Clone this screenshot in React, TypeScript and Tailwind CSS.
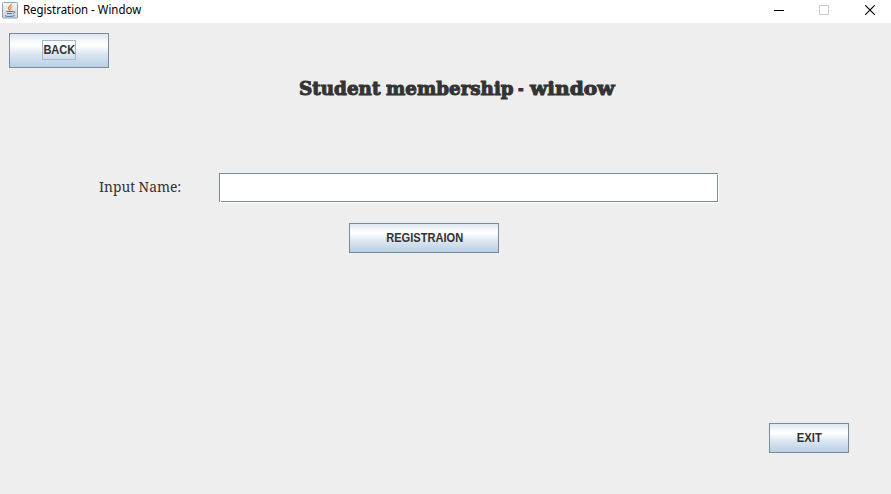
import type { ReactNode } from 'react';

function JavaIcon() {
  return (
    <svg width="16" height="17" viewBox="0 0 16 17" className="block shrink-0" fill="none">
      <defs>
        <linearGradient id="tile" x1="0" y1="0" x2="0" y2="1">
          <stop offset="0" stopColor="#f6f8fa" />
          <stop offset="1" stopColor="#c3d0dc" />
        </linearGradient>
      </defs>
      <rect x="0.5" y="0.5" width="15" height="15.5" rx="1" fill="url(#tile)" stroke="#8ea2b5" />
      <path d="M9.2 2C9.6 4 5.8 4.6 6.6 6.4C6.9 7.1 7.6 7.5 7.4 8.6" stroke="#e8843c" strokeWidth="1.5" />
      <path d="M10.4 4.4C8.2 5.2 8.2 6 8.9 6.9C9.2 7.4 8.9 8 8.5 8.4" stroke="#e8843c" strokeWidth="1" />
      <path d="M4.4 9.5H11M5 11.5H10.2M3 13.7C4.6 14.8 10.4 14.8 12.6 13.6" stroke="#55799b" strokeWidth="1" />
      <path d="M11 9.4C13.6 8.8 13.4 11 11 11.6" stroke="#55799b" strokeWidth="0.9" />
    </svg>
  );
}

function TitleBar() {
  return (
    <header className="flex h-[23px] items-start bg-white">
      <div className="flex pl-[2px] pt-[2px]">
        <JavaIcon />
        <span className="ml-[5px] inline-block h-4 origin-left scale-x-[0.953] whitespace-nowrap font-['Noto_Sans',sans-serif] text-[12px] leading-[16px] text-black">
          Registration - Window
        </span>
      </div>
      <div className="ml-auto flex pr-4 pt-[5px]">
        <svg width="10" height="10" className="mr-[35px]" shapeRendering="crispEdges">
          <path d="M0 5.5H10" stroke="#000" />
        </svg>
        <svg width="10" height="10" className="mr-[36px]" shapeRendering="crispEdges">
          <rect x="0.5" y="0.5" width="9" height="9" fill="none" stroke="#cccccc" />
        </svg>
        <svg width="10" height="10">
          <path d="M0.3 0.3L9.7 9.7M9.7 0.3L0.3 9.7" stroke="#000" strokeWidth="1.15" />
        </svg>
      </div>
    </header>
  );
}

function MetalButton({ className, children }: { className: string; children: ReactNode }) {
  return (
    <button
      className={`flex items-center justify-center border border-[#7a8a99] bg-[linear-gradient(to_bottom,#dde8f3_0%,#ffffff_30%,#ffffff_34%,#dce7f2_60%,#b8cfe5_100%)] font-['Liberation_Sans',sans-serif] text-[12px] font-bold leading-[14px] text-[#333333] ${className}`}
    >
      {children}
    </button>
  );
}

export default function App() {
  return (
    <div className="flex h-[494px] w-[891px] flex-col overflow-hidden bg-[#eeeeee] text-[#333333]">
      <TitleBar />
      <main className="flex flex-1 flex-col">
        <MetalButton className="ml-[9px] mt-[10px] h-[35px] w-[100px] pb-[2px]">
          <span className="flex h-[20px] w-[34px] items-center justify-center border border-[#a3b8cc]">
            <span className="inline-block scale-x-[0.92]">BACK</span>
          </span>
        </MetalButton>
        <h1 className="ml-[299px] mt-[9px] flex h-6 whitespace-nowrap font-['DejaVu_Serif',serif] text-[18px] font-bold leading-6 [-webkit-text-stroke:1px_#333333]">
          <span className="w-[87px]"><span className="inline-block origin-left scale-x-[1.02]">Student </span></span>
          <span className="w-[132px]"><span className="inline-block origin-left scale-x-[1.015]">membership </span></span>
          <span className="w-[12px]"><span className="inline-block origin-left scale-x-[0.75]">- </span></span>
          <span><span className="inline-block origin-left scale-x-[1.12]">window</span></span>
        </h1>
        <div className="mt-[72px] flex h-[29px]">
          <label htmlFor="name" className="ml-[99px] w-[120px] whitespace-nowrap font-['Noto_Serif','DejaVu_Serif',serif] text-[14px] leading-[28px]">
            <span className="inline-block origin-left scale-x-[0.985]">Input Name:</span>
          </label>
          <div className="relative h-[29px] w-[499px]">
            <input id="name" className="block h-full w-full border border-[#7a8a99] bg-white shadow-[1px_1px_0_#ffffff] outline-none" />
            <span className="absolute bottom-0 left-px h-px w-px bg-white" />
            <span className="absolute right-0 top-px h-px w-px bg-white" />
          </div>
        </div>
        <MetalButton className="ml-[349px] mt-[21px] h-[30px] w-[150px] pl-[2px]">
          <span className="inline-block scale-x-[0.925]">REGISTRAION</span>
        </MetalButton>
        <MetalButton className="ml-[769px] mt-[170px] h-[30px] w-[80px]">
          <span className="inline-block scale-x-[0.94]">EXIT</span>
        </MetalButton>
      </main>
    </div>
  );
}
